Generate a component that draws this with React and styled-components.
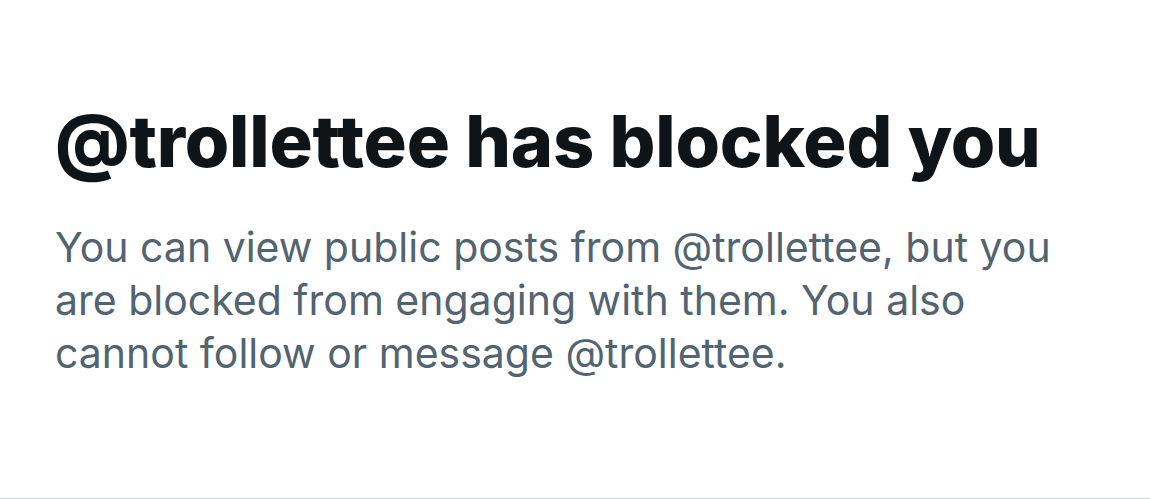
import React from 'react'
import styled, { createGlobalStyle } from 'styled-components'

const Global = createGlobalStyle`
  html, body {
    margin: 0;
    padding: 0;
    background: #fff;
  }
  body {
    font-family: Inter, "Noto Sans", "Liberation Sans", sans-serif;
  }
`

const App = () => {
  return (
    <>
      <Global />
      <Wrap>
        <Content>
          <Title>@trollettee has blocked you</Title>
          <Body>
            You can view public posts from @trollettee, but you are blocked from engaging with them. You also cannot follow or message @trollettee.
          </Body>
        </Content>
      </Wrap>
    </>
  )
}

export default App

const Wrap = styled.div`
  width: 1150px;
  height: 499px;
  box-sizing: border-box;
  border-bottom: 1px solid #cfd9de;
  display: flex;
  flex-direction: column;
`

const Content = styled.div`
  padding: 97px 55px 0;
  display: flex;
  flex-direction: column;
  gap: 36px;
`

const Title = styled.h1`
  margin: 0;
  font-size: 72px;
  font-weight: 800;
  line-height: 88px;
  color: #0f1419;
  letter-spacing: -0.2px;
`

const Body = styled.p`
  margin: 0;
  max-width: 1010px;
  font-size: 41px;
  line-height: 53px;
  color: #536471;
`
